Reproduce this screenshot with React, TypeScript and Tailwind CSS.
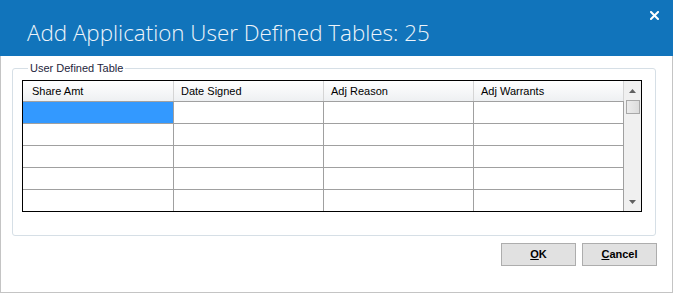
import React from "react";

const cols = ["Share Amt", "Date Signed", "Adj Reason", "Adj Warrants"];
const colW = ["w-[151px]", "w-[150px]", "w-[150px]", "w-[150px]"];
const colPad = ["pl-[9px]", "pl-[7px]", "pl-[7px]", "pl-[7px]"];

export default function App() {
  const rows = [0, 1, 2, 3, 4];
  return (
    <div className="w-[673px] h-[293px] bg-white flex flex-col" style={{ fontFamily: '"Liberation Sans", Arial, sans-serif' }}>
      <div className="h-[56px] bg-[#1174bb] flex items-start justify-between shrink-0">
        <div
          className="pl-[27px] pt-[18px] text-[22.4px] leading-[30px] font-light text-[#eef4fa]"
          style={{ fontFamily: '"Open Sans", sans-serif' }}
        >
          Add Application User Defined Tables: 25
        </div>
        <svg className="mt-[11px] mr-[14px]" width="9" height="9" viewBox="0 0 9 9">
          <path d="M1 1 L8 8 M8 1 L1 8" stroke="#ffffff" strokeWidth="2" strokeLinecap="square" />
        </svg>
      </div>
      <div className="flex-1 border-l border-r border-b border-[#c4c4c4] flex flex-col">
        <fieldset className="ml-[11px] mt-[6px] w-[644px] h-[174px] border border-[#d6dfe6] rounded-[3px] pl-[9px]">
          <legend className="ml-[6px] px-[2px] text-[11px] leading-[12px] text-[#1e1e3c]">User Defined Table</legend>
          <div className="mt-[6px] w-[620px] border border-black flex">
            <div className="flex flex-col">
              <div className="flex h-[21px] border-b border-[#a0a0a0] bg-gradient-to-b from-white to-[#eef0f2]">
                {cols.map((c, i) => (
                  <div
                    key={c}
                    className={`${colW[i]} ${colPad[i]} border-r border-[#d5d5d5] text-[11px] leading-[20px] text-black`}
                  >
                    {c}
                  </div>
                ))}
              </div>
              {rows.map((r) => (
                <div key={r} className={`flex ${r < 4 ? "h-[22px] border-b" : "h-[21px]"} border-[#a0a0a0]`}>
                  {cols.map((c, i) => (
                    <div
                      key={c}
                      className={`${colW[i]} border-r border-[#a0a0a0] ${r === 0 && i === 0 ? "bg-[#3399ff]" : "bg-white"}`}
                    />
                  ))}
                </div>
              ))}
            </div>
            <div className="w-[17px] bg-[#f0f0f0] flex flex-col items-center">
              <div className="h-[19px] flex items-center justify-center">
                <svg width="7" height="4" viewBox="0 0 7 4">
                  <path d="M3.5 0 L7 4 L0 4 Z" fill="#606060" />
                </svg>
              </div>
              <div className="w-[14px] h-[14px] border border-[#a8a8a8] bg-gradient-to-r from-[#ececec] to-[#dcdcdc]" />
              <div className="flex-1" />
              <div className="h-[19px] flex items-center justify-center">
                <svg width="7" height="4" viewBox="0 0 7 4">
                  <path d="M0 0 L7 0 L3.5 4 Z" fill="#606060" />
                </svg>
              </div>
            </div>
          </div>
        </fieldset>
        <div className="flex justify-end gap-[6px] pr-[15px] mt-[7px]">
          <button className="w-[75px] h-[23px] bg-[#e1e1e1] border border-[#adadad] text-[11px] font-bold text-black leading-[21px]">
            <span className="underline">O</span>K
          </button>
          <button className="w-[75px] h-[23px] bg-[#e1e1e1] border border-[#adadad] text-[11px] font-bold text-black leading-[21px]">
            <span className="underline">C</span>ancel
          </button>
        </div>
      </div>
    </div>
  );
}
